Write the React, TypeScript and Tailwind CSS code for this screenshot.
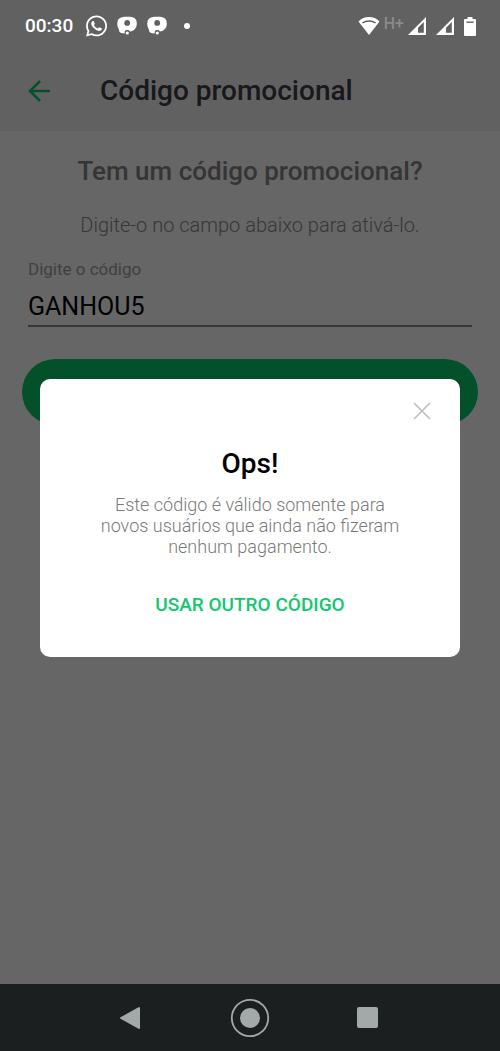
import React, { useState } from 'react';
import { FaWhatsapp } from 'react-icons/fa';

const PinIcon = () => (
  <svg width="20" height="20" viewBox="0 0 20 20" aria-hidden="true">
    <path
      fill="currentColor"
      fillRule="evenodd"
      d="M5 1.2C8 0.7 12.5 0.7 15.4 1.2C18.4 1.8 19.8 3.8 19.8 7.4C19.8 12 17 15 12.9 15.4C11.8 13.6 8.8 13.6 7.8 15.4L7.6 17.4C5.2 17.4 2.6 16.8 2.2 15.2L1.8 13.2C0.6 11.4 0.2 9.4 0.3 7.2C0.4 3.8 1.8 1.8 5 1.2ZM10.2 4A2.9 2.9 0 1 0 10.2 9.8A2.9 2.9 0 1 0 10.2 4Z"
    />
    <circle cx="10.3" cy="17" r="1.6" fill="currentColor" />
  </svg>
);

const WifiIcon = () => (
  <svg width="22" height="20" viewBox="0 0 22 20" aria-hidden="true">
    <path fill="currentColor" d="M0.5 5.4C3.4 2.4 7 1 11 1S18.6 2.4 21.5 5.4L11 19Z" />
    <path fill="none" stroke="#616161" strokeWidth="1.5" d="M4.4 7C8 4.4 14 4.4 17.6 7" />
  </svg>
);

const SignalIcon = () => (
  <svg width="18" height="18" viewBox="0 0 18 18" aria-hidden="true">
    <path fill="currentColor" fillRule="evenodd" d="M18 0V18H0ZM15.8 5L10 10.8V15.8H15.8Z" />
  </svg>
);

const BatteryIcon = () => (
  <svg width="12" height="19" viewBox="0 0 12 19" aria-hidden="true">
    <path fill="currentColor" d="M3.5 0H8.5V2H11Q12 2 12 3V18Q12 19 11 19H1Q0 19 0 18V3Q0 2 1 2H3.5Z" />
    <path stroke="#616161" strokeWidth="1.4" d="M2.4 5.2H9.6" />
  </svg>
);

const StatusBar = () => (
  <div className="relative z-20 flex h-[52px] items-center justify-between pr-6 pl-[25px] text-white">
    <div className="flex items-center">
      <span className="text-[19px] leading-6 font-medium">00:30</span>
      <div className="ml-[13px] flex items-center gap-[10px]">
        <FaWhatsapp size={24} className="w-[21px]" />
        <PinIcon />
        <PinIcon />
      </div>
      <span className="ml-[17px] size-[6px] rounded-full bg-white" />
    </div>
    <div className="flex items-center">
      <WifiIcon />
      <span className="mr-1 ml-1 pb-1 text-[16px] leading-5 font-medium text-[#8a8a8a]">H+</span>
      <div className="flex items-center gap-[10px]">
        <SignalIcon />
        <SignalIcon />
        <BatteryIcon />
      </div>
    </div>
  </div>
);

const NavBar = () => (
  <nav className="flex h-[67px] items-center justify-center bg-[#1c1f20] text-[#a3a8a9]">
    <div className="grid grid-cols-[24px_40px_24px] items-center gap-[87px]">
      <button type="button" aria-label="Voltar">
        <svg width="22" height="24" viewBox="0 0 22 24" aria-hidden="true">
          <path
            fill="currentColor"
            stroke="currentColor"
            strokeWidth="2"
            strokeLinejoin="round"
            d="M2 12L20 2V22Z"
          />
        </svg>
      </button>
      <button type="button" aria-label="Início">
        <svg width="40" height="40" viewBox="0 0 40 40" aria-hidden="true">
          <circle cx="20" cy="20" r="18.2" fill="none" stroke="currentColor" strokeWidth="1.8" />
          <circle cx="20" cy="20" r="10" fill="currentColor" />
        </svg>
      </button>
      <button type="button" aria-label="Recentes" className="size-[21px] rounded-xs bg-[#a3a8a9]" />
    </div>
  </nav>
);

interface ErrorDialogProps {
  onClose: () => void;
}

const ErrorDialog: React.FC<ErrorDialogProps> = ({ onClose }) => (
  <div className="absolute inset-x-0 top-0 bottom-[67px] z-10 flex items-center bg-black/60 px-10 pt-[52px]">
    <div
      role="dialog"
      aria-labelledby="dialog-title"
      className="flex w-full flex-col items-center rounded-[10px] bg-white px-12 pt-[19px] pb-10 text-center"
    >
      <button type="button" aria-label="Fechar" onClick={onClose} className="-mr-[23px] self-end p-1 text-[#bdbdbd]">
        <svg width="18" height="18" viewBox="0 0 18 18" aria-hidden="true">
          <path stroke="currentColor" strokeWidth="1.6" d="M1 1L17 17M17 1L1 17" />
        </svg>
      </button>
      <h2 id="dialog-title" className="mt-6 text-[28px] leading-8 font-medium text-black">
        Ops!
      </h2>
      <p className="mt-[14px] text-[18px] leading-[21px] font-light text-[#7a7a7a]">
        Este código é válido somente para
        <br />
        novos usuários que ainda não fizeram
        <br />
        nenhum pagamento.
      </p>
      <button type="button" onClick={onClose} className="mt-9 text-[19px] leading-6 font-medium text-[#11c76f]">
        USAR OUTRO CÓDIGO
      </button>
    </div>
  </div>
);

export default function App() {
  const [code, setCode] = useState('GANHOU5');
  const [open, setOpen] = useState(true);

  return (
    <div className="relative flex min-h-screen flex-col bg-white font-[Roboto,sans-serif]">
      <div className="border-b border-[#ebebeb] bg-[#f3f3f3]">
        <StatusBar />
        <header className="flex h-[78px] items-center px-7">
          <button type="button" aria-label="Voltar" className="text-[#11c76f]">
            <svg width="23" height="22" viewBox="0 0 23 22" aria-hidden="true">
              <path fill="none" stroke="currentColor" strokeWidth="2.6" d="M22 11H2M12 1L2 11L12 21" />
            </svg>
          </button>
          <h1 className="ml-[49px] text-[28px] leading-8 font-medium text-[#3d3d4a]">Código promocional</h1>
        </header>
      </div>

      <main className="flex-1 px-7 pt-6">
        <h2 className="text-center text-[26px] leading-8 font-medium text-[#858585]">Tem um código promocional?</h2>
        <p className="mt-[26px] text-center text-[20px] leading-6 font-light text-[#8a8a8a]">
          Digite-o no campo abaixo para ativá-lo.
        </p>
        <label htmlFor="code" className="mt-5 block text-[17px] leading-6 text-[#a0a0a0]">
          Digite o código
        </label>
        <input
          id="code"
          type="text"
          value={code}
          onChange={(e) => setCode(e.target.value)}
          className="mt-[10px] block w-full border-b-2 border-[#8a8a8a] pb-[2px] text-[25px] leading-8 text-black outline-none"
        />
        <div className="-mx-[6px] mt-8">
          <button
            type="button"
            aria-label="Ativar código"
            onClick={() => setOpen(true)}
            className="h-[66px] w-full rounded-full bg-[#0ac86c]"
          />
        </div>
      </main>

      <NavBar />
      {open && <ErrorDialog onClose={() => setOpen(false)} />}
    </div>
  );
}
